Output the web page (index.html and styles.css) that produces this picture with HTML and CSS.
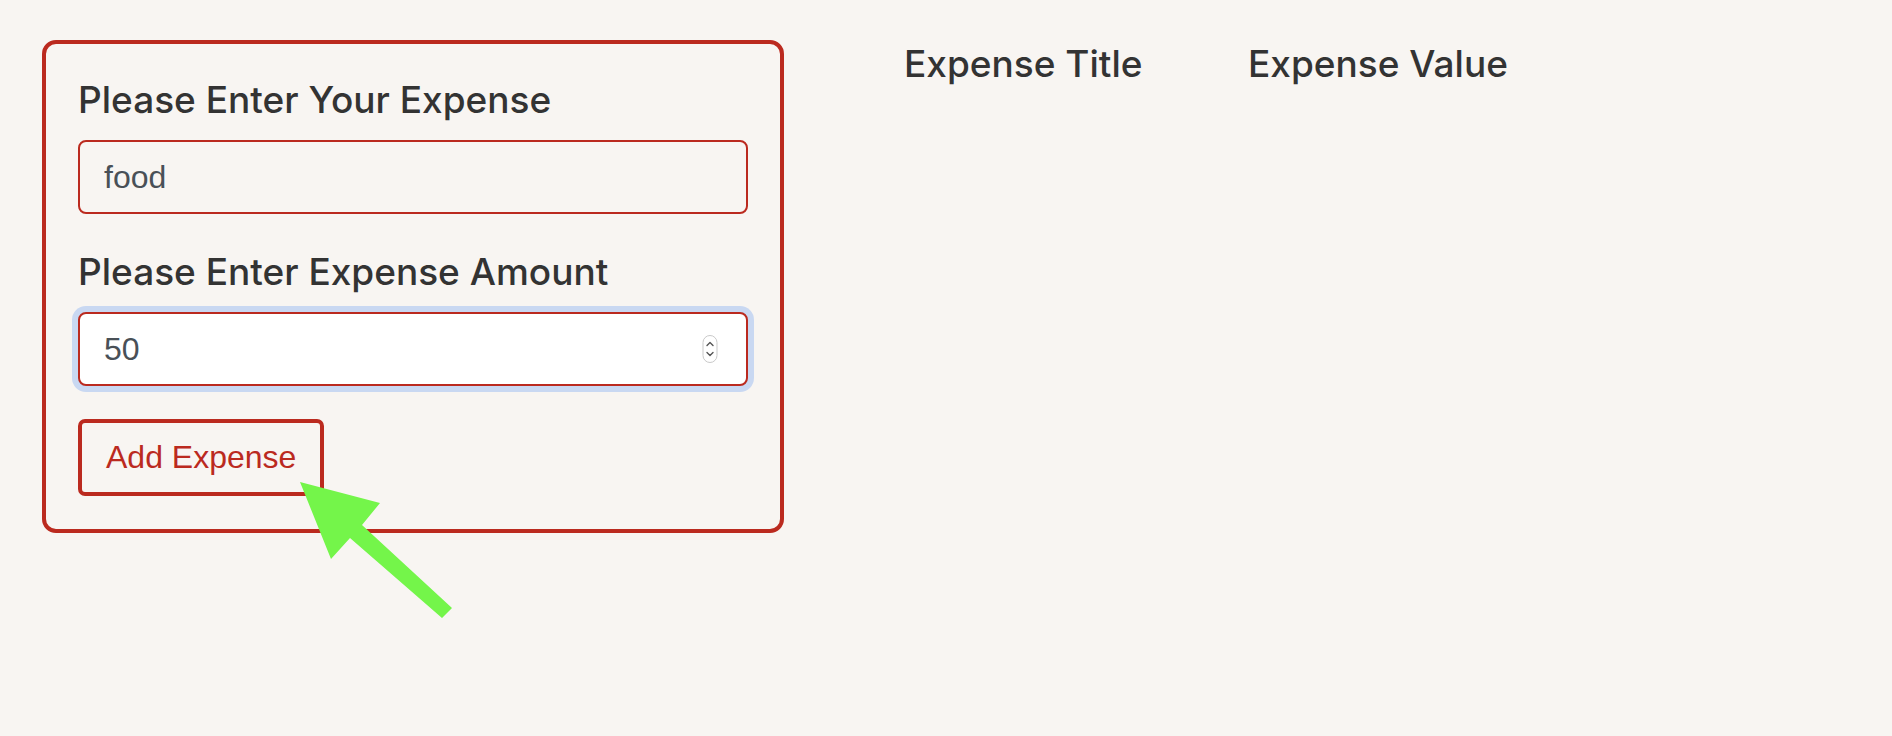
FILE: index.html
```html
<!DOCTYPE html>
<html lang="en">
<head>
<meta charset="utf-8">
<title>Expenses</title>
<link rel="stylesheet" href="styles.css">
</head>
<body>
<div class="page">
  <form class="card">
    <label class="label" for="title">Please Enter Your Expense</label>
    <input class="input" id="title" type="text" value="food">
    <label class="label label-2" for="amount">Please Enter Expense Amount</label>
    <div class="input-wrap">
      <input class="input input-focus" id="amount" type="text" value="50">
      <svg class="spinner" width="16" height="29" viewBox="0 0 16 29">
        <rect x="1" y="1" width="14" height="27" rx="7" fill="#fff" stroke="#c9c9c9" stroke-width="1"/>
        <path d="M5 11 L8 8 L11 11" fill="none" stroke="#555" stroke-width="1.4" stroke-linecap="round" stroke-linejoin="round"/>
        <path d="M5 18 L8 21 L11 18" fill="none" stroke="#555" stroke-width="1.4" stroke-linecap="round" stroke-linejoin="round"/>
      </svg>
    </div>
    <button class="btn" type="button">Add Expense</button>
  </form>
  <table class="list">
    <thead>
      <tr><th class="col-title">Expense Title</th><th>Expense Value</th></tr>
    </thead>
  </table>
</div>
<svg class="arrow" width="170" height="160" viewBox="290 470 170 160">
  <polygon points="300,482 380,503 362,525 452,608 442,618 350,538 331,559" fill="#74f54a"/>
</svg>
</body>
</html>
```

FILE: styles.css
```css
html, body {
  margin: 0;
  padding: 0;
}
body {
  background: #f8f5f2;
  font-family: "Liberation Sans", Arial, sans-serif;
  color: #333;
  width: 1892px;
  height: 736px;
  position: relative;
  overflow: hidden;
}
.page {
  display: flex;
  align-items: flex-start;
  padding: 40px 0 0 42px;
  gap: 120px;
}
.card {
  box-sizing: border-box;
  width: 742px;
  border: 4px solid #bb2a1f;
  border-radius: 14px;
  padding: 34px 32px 33px 32px;
  display: flex;
  flex-direction: column;
  align-items: flex-start;
}
.label {
  font-family: Inter, "Liberation Sans", sans-serif;
  font-weight: 500;
  font-size: 37px;
  line-height: 44px;
  color: #333;
  margin-bottom: 18px;
}
.label-2 {
  margin-top: 36px;
}
.input-wrap {
  position: relative;
  width: 100%;
}
.input {
  box-sizing: border-box;
  width: 100%;
  height: 74px;
  border: 2px solid #bb2a1f;
  border-radius: 8px;
  background: transparent;
  padding: 0 24px;
  font-family: "Liberation Sans", Arial, sans-serif;
  font-size: 32px;
  color: #495057;
  outline: none;
  display: block;
}
.input-focus {
  background: #fff;
  box-shadow: 0 0 0 6px #c9d8f2;
}
.spinner {
  position: absolute;
  right: 30px;
  top: 50%;
  transform: translateY(-50%);
}
.btn {
  margin-top: 33px;
  box-sizing: border-box;
  height: 77px;
  padding: 0 24px;
  border: 4px solid #bb2a1f;
  border-radius: 7px;
  background: transparent;
  color: #bb2a1f;
  font-family: "Liberation Sans", Arial, sans-serif;
  font-size: 32px;
}
.list {
  border-collapse: collapse;
  margin-top: 2px;
}
.list th {
  padding: 0;
  text-align: left;
  font-family: Inter, "Liberation Sans", sans-serif;
  font-weight: 500;
  font-size: 37px;
  line-height: 44px;
  color: #333;
}
.list .col-title {
  width: 344px;
}
.arrow {
  position: absolute;
  left: 290px;
  top: 470px;
  pointer-events: none;
}
```
